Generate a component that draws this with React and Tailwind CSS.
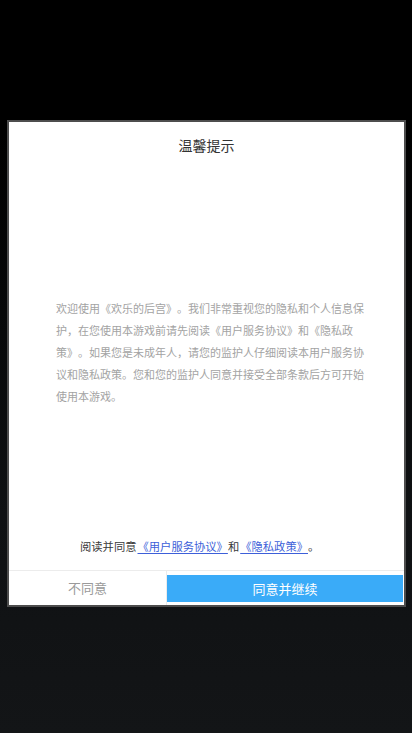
import React from "react";

const font = { fontFamily: '"Noto Sans CJK SC", "Noto Sans", sans-serif' };

export default function App() {
  return (
    <div
      className="w-[412px] h-[733px] pt-[120px] bg-[linear-gradient(to_bottom,#000000_0%,#000000_18%,#0f1113_70%,#131517_100%)] [text-spacing-trim:space-all]"
      style={font}
    >
      <div className="ml-[7px] w-[399px] border-2 border-[#4d4d4d] bg-white flex flex-col">
        <div className="h-[46px] flex items-center justify-center text-[14px] text-[#333333]">
          温馨提示
        </div>

        <div className="h-[362px] flex flex-col justify-center pt-[6px]">
          <p className="ml-[47px] w-[310px] text-[11px] leading-[22px] text-[#a3a3a3]">
            欢迎使用《欢乐的后宫》。我们非常重视您的隐私和个人信息保护，在您使用本游戏前请先阅读《用户服务协议》和《隐私政策》。如果您是未成年人，请您的监护人仔细阅读本用户服务协议和隐私政策。您和您的监护人同意并接受全部条款后方可开始使用本游戏。
          </p>
        </div>

        <div className="h-[32px] flex items-center pl-[71px] text-[11.3px] text-[#3a3a3a]">
          <span>阅读并同意</span>
          <a className="text-[#3d5fd9] underline underline-offset-2 pl-[1px]">《用户服务协议》</a>
          <span>和</span>
          <a className="text-[#3d5fd9] underline underline-offset-2 pl-[1px]">《隐私政策》</a>
          <span>。</span>
        </div>

        <div className="h-[8px]" />

        <div className="h-[35px] flex border-t border-[#ececec]">
          <button className="w-[158px] border-r border-[#ececec] flex items-center justify-center text-[13px] text-[#9a9a9a]">
            不同意
          </button>
          <div className="flex-1 pt-[4px] pb-[3px] pr-[1px] flex">
            <button className="flex-1 bg-[#3aabf8] flex items-center justify-center text-[13px] text-white">
              同意并继续
            </button>
          </div>
        </div>
      </div>
    </div>
  );
}
